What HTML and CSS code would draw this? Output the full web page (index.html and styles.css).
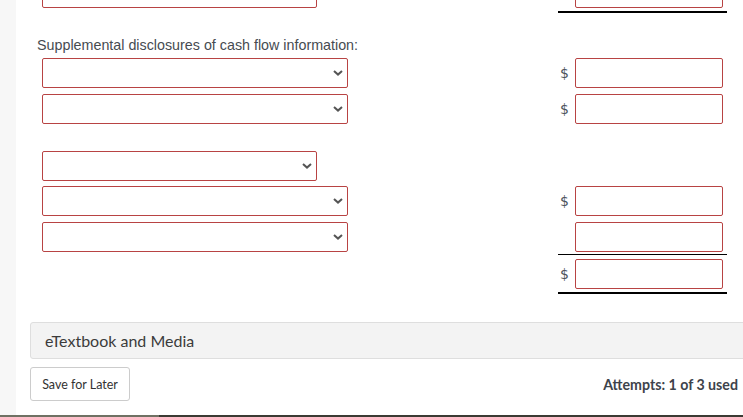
FILE: index.html
```html
<!DOCTYPE html>
<html lang="en">
<head>
<meta charset="utf-8">
<title>Cash flow statement</title>
<link rel="stylesheet" href="styles.css">
</head>
<body>
<div class="page">
  <div class="rail"></div>
  <div class="main">
    <div class="row r0">
      <div class="left"><div class="select narrow"><svg class="chev" width="10" height="6" viewBox="0 0 10 6"><path d="M1 1 L5 4.6 L9 1" fill="none" stroke="#555" stroke-width="2"/></svg></div></div>
      <div class="right"><span class="cur"></span><div class="input"></div></div>
    </div>
    <div class="rule thick r0rule"></div>

    <div class="label">Supplemental disclosures of cash flow information:</div>

    <div class="row r1">
      <div class="left"><div class="select wide"><svg class="chev" width="10" height="6" viewBox="0 0 10 6"><path d="M1 1 L5 4.6 L9 1" fill="none" stroke="#555" stroke-width="2"/></svg></div></div>
      <div class="right"><span class="cur">$</span><div class="input"></div></div>
    </div>
    <div class="row r2">
      <div class="left"><div class="select wide"><svg class="chev" width="10" height="6" viewBox="0 0 10 6"><path d="M1 1 L5 4.6 L9 1" fill="none" stroke="#555" stroke-width="2"/></svg></div></div>
      <div class="right"><span class="cur">$</span><div class="input"></div></div>
    </div>
    <div class="row r3">
      <div class="left"><div class="select narrow"><svg class="chev" width="10" height="6" viewBox="0 0 10 6"><path d="M1 1 L5 4.6 L9 1" fill="none" stroke="#555" stroke-width="2"/></svg></div></div>
    </div>
    <div class="row r4">
      <div class="left"><div class="select wide"><svg class="chev" width="10" height="6" viewBox="0 0 10 6"><path d="M1 1 L5 4.6 L9 1" fill="none" stroke="#555" stroke-width="2"/></svg></div></div>
      <div class="right"><span class="cur">$</span><div class="input"></div></div>
    </div>
    <div class="row r5">
      <div class="left"><div class="select wide"><svg class="chev" width="10" height="6" viewBox="0 0 10 6"><path d="M1 1 L5 4.6 L9 1" fill="none" stroke="#555" stroke-width="2"/></svg></div></div>
      <div class="right"><span class="cur"></span><div class="input"></div></div>
    </div>
    <div class="rule thin r5rule"></div>
    <div class="row r6">
      <div class="left"></div>
      <div class="right"><span class="cur">$</span><div class="input"></div></div>
    </div>
    <div class="rule thick r6rule"></div>

    <div class="media-bar">eTextbook and Media</div>

    <div class="footer">
      <button class="save" type="button">Save for Later</button>
      <span class="attempts">Attempts: 1 of 3 used</span>
    </div>
  </div>
</div>
<div class="edge"></div>
</body>
</html>
```
FILE: styles.css
```css
html, body {
  margin: 0;
  padding: 0;
  background: #ffffff;
  overflow: hidden;
}
body {
  width: 743px;
  height: 417px;
  display: flex;
  flex-direction: column;
  font-family: "Liberation Sans", Arial, sans-serif;
}
.page {
  height: 415px;
  display: flex;
  flex-direction: row;
  overflow: hidden;
}
.rail {
  width: 16px;
  flex: none;
  background: #f7f7f7;
}
.main {
  flex: 1;
  min-width: 0;
  display: flex;
  flex-direction: column;
}
.row {
  display: flex;
  align-items: flex-start;
  height: 30px;
  flex: none;
}
.left {
  width: 516px;
  padding-left: 26px;
  flex: none;
}
.right {
  display: flex;
  align-items: center;
  width: 169px;
  height: 30px;
  flex: none;
}
.cur {
  width: 15px;
  padding-left: 2px;
  font-family: "DejaVu Sans", Verdana, sans-serif;
  font-size: 14px;
  color: #4d545c;
  line-height: 16px;
}
.select,
.input {
  box-sizing: border-box;
  height: 30px;
  border: 1px solid #b84343;
  border-radius: 2px;
  background: #ffffff;
}
.select {
  display: flex;
  align-items: center;
  justify-content: flex-end;
  padding-right: 4px;
}
.select.wide { width: 306px; }
.select.narrow { width: 275px; }
.input { width: 148px; }
.chev { display: block; }

.rule {
  margin-left: 542px;
  width: 169px;
  background: #000000;
  flex: none;
}
.rule.thick { height: 2px; }
.rule.thin { height: 1px; }

.r0 { margin-top: -22px; }
.r0rule { margin-top: 3px; }
.label {
  margin-top: 24px;
  margin-left: 21px;
  font-size: 14.3px;
  line-height: 16px;
  color: #464b51;
  white-space: nowrap;
}
.r1 { margin-top: 5px; }
.r2 { margin-top: 6px; }
.r3 { margin-top: 27px; }
.r4 { margin-top: 5px; }
.r5 { margin-top: 6px; }
.r5rule { margin-top: 2px; }
.r6 { margin-top: 4px; }
.r6rule { margin-top: 3px; }

.media-bar {
  margin-top: 28px;
  margin-left: 14px;
  margin-right: -10px;
  box-sizing: border-box;
  height: 37px;
  flex: none;
  border: 1px solid #dedede;
  border-radius: 3px;
  background: #f3f3f3;
  padding-left: 14px;
  display: flex;
  align-items: center;
  font-family: Lato, sans-serif;
  font-size: 16px;
  color: #3b3b3b;
}

.footer {
  margin-top: 8px;
  margin-left: 14px;
  margin-right: 5px;
  display: flex;
  align-items: center;
  justify-content: space-between;
  height: 34px;
  flex: none;
}
.save {
  box-sizing: border-box;
  height: 34px;
  width: 100px;
  padding: 0;
  border: 1px solid #cccccc;
  border-radius: 3px;
  background: #ffffff;
  font-family: Lato, sans-serif;
  font-size: 12.5px;
  color: #333333;
}
.attempts {
  font-family: Lato, sans-serif;
  font-weight: bold;
  font-size: 14.2px;
  color: #3d434b;
}

.edge {
  height: 2px;
  flex: none;
  background: linear-gradient(to right, #6f7163 0, #6f7163 159px, #3b3a33 159px, #3b3a33 100%);
}
```
